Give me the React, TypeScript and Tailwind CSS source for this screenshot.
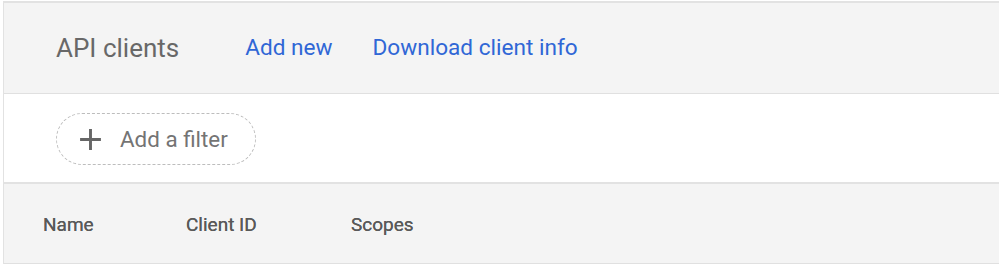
export default function App() {
  return (
    <div className="min-h-screen bg-white pt-px pl-[3px] font-['Roboto',sans-serif]">
      <div className="border-l border-t-2 border-[#e2e2e2]">
        {/* Header */}
        <div className="flex h-[91px] items-center border-b border-[#e0e0e0] bg-[#f4f4f4] pl-[52px]">
          <h1 className="text-[26px] leading-none text-[#686868]">API clients</h1>
          <a className="ml-[66px] text-[22.6px] leading-none text-[#3067d6]">Add new</a>
          <a className="ml-[40px] text-[22.6px] leading-none text-[#3067d6]">Download client info</a>
        </div>

        {/* Filter bar */}
        <div className="flex h-[90px] items-center border-b-2 border-[#e2e2e2] pl-[52px] pt-[2px]">
          <button className="flex h-[52px] w-[200px] items-center rounded-full border border-dashed border-[#bdbdbd] pl-[21px]">
            <svg width="25" height="25" viewBox="0 0 24 24" className="text-[#666666]">
              <path d="M12 2v20M2 12h20" stroke="currentColor" strokeWidth="2.8" fill="none" />
            </svg>
            <span className="ml-[17px] text-[22.4px] leading-none text-[#747474]">Add a filter</span>
          </button>
        </div>

        {/* Table head */}
        <div className="flex h-[80px] items-center border-b border-[#e0e0e0] bg-[#f4f4f4] pl-[39px] pt-[3px] text-[19px] text-[#595959] [text-shadow:0_0_0.4px_#595959]">
          <div className="w-[143px]">Name</div>
          <div className="w-[165px]">Client ID</div>
          <div>Scopes</div>
        </div>
      </div>
    </div>
  )
}
